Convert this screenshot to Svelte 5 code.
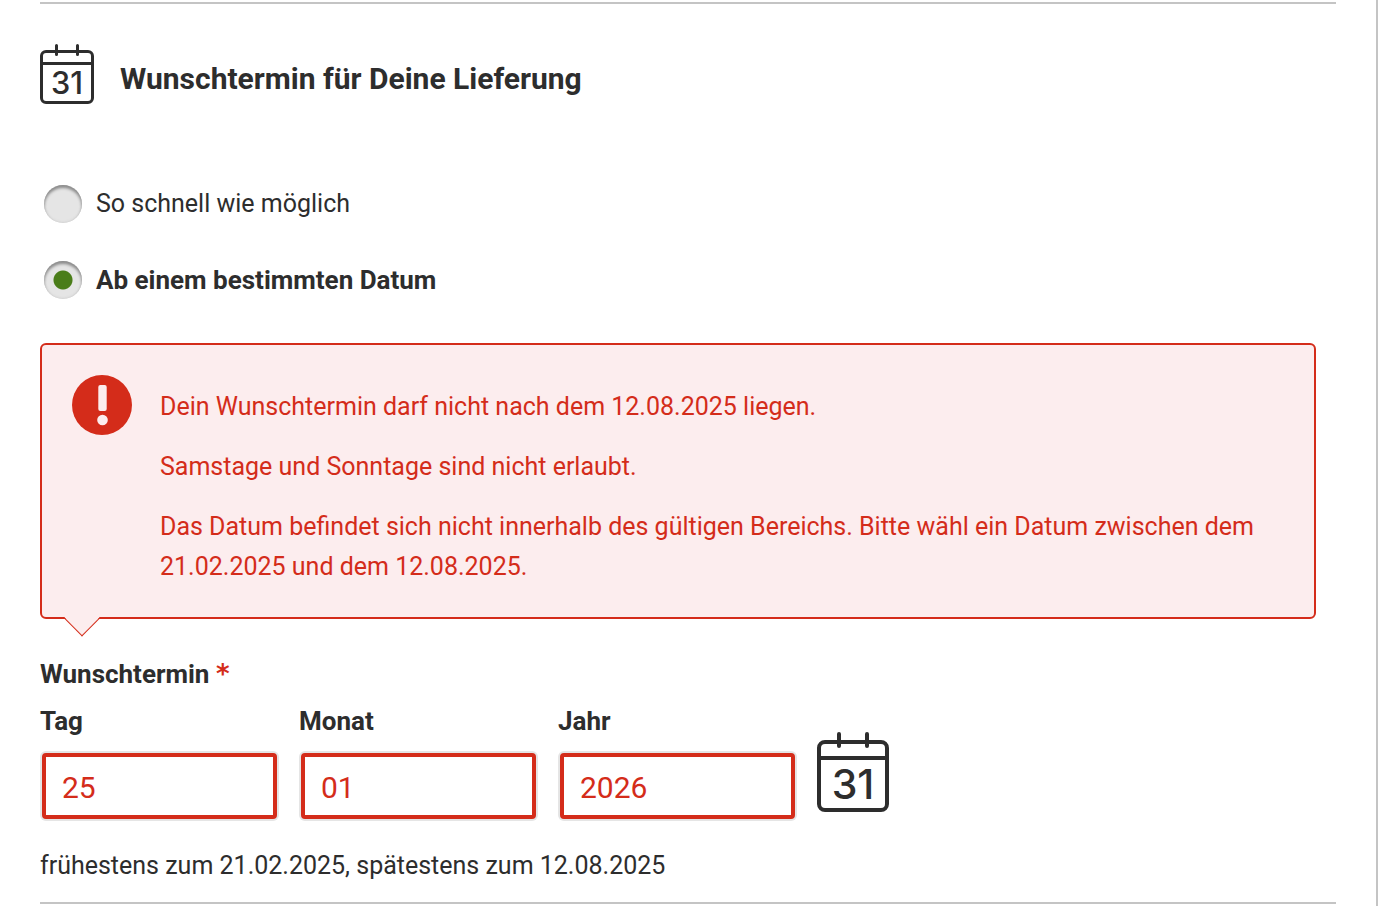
<script lang="ts">
    type Mode = "asap" | "date";

    let mode: Mode = $state("date");

    const options: { value: Mode; label: string }[] = [
        { value: "asap", label: "So schnell wie möglich" },
        { value: "date", label: "Ab einem bestimmten Datum" },
    ];

    const errors = [
        "Dein Wunschtermin darf nicht nach dem 12.08.2025 liegen.",
        "Samstage und Sonntage sind nicht erlaubt.",
        "Das Datum befindet sich nicht innerhalb des gültigen Bereichs. Bitte wähl ein Datum zwischen dem 21.02.2025 und dem 12.08.2025.",
    ];

    let fields = $state([
        { id: "day", label: "Tag", value: "25", max: 2 },
        { id: "month", label: "Monat", value: "01", max: 2 },
        { id: "year", label: "Jahr", value: "2026", max: 4 },
    ]);
</script>

{#snippet calendarIcon()}
    <svg class="calendar" viewBox="0 0 72 80" aria-hidden="true">
        <g
            fill="none"
            stroke="currentColor"
            stroke-width="4"
            stroke-linecap="round"
        >
            <rect x="2" y="10" width="68" height="68" rx="6" />
            <path d="M2 26H70" stroke-linecap="butt" />
            <path d="M22 2V14M50 2V14" />
        </g>
        <text x="36" y="67" text-anchor="middle">31</text>
    </svg>
{/snippet}

<main class="page">
    <section class="delivery">
        <header class="header">
            {@render calendarIcon()}
            <h2>Wunschtermin für Deine Lieferung</h2>
        </header>

        <div class="options" role="radiogroup" aria-label="Wunschtermin">
            {#each options as option (option.value)}
                <label class="option" class:selected={mode === option.value}>
                    <input
                        type="radio"
                        name="mode"
                        value={option.value}
                        bind:group={mode}
                    />
                    <span>{option.label}</span>
                </label>
            {/each}
        </div>

        {#if mode === "date"}
            <div class="alert" role="alert">
                <svg class="alert-icon" viewBox="0 0 60 60" aria-hidden="true">
                    <circle cx="30" cy="30" r="30" fill="#d42c1a" />
                    <rect
                        x="26.3"
                        y="10"
                        width="8.4"
                        height="26"
                        rx="2"
                        fill="#fcedee"
                    />
                    <circle cx="30.5" cy="45" r="5.3" fill="#fcedee" />
                </svg>
                <div class="alert-text">
                    {#each errors as error}
                        <p>{error}</p>
                    {/each}
                </div>
            </div>

            <fieldset class="date">
                <legend>Wunschtermin <span class="required">*</span></legend>
                <div class="date-row">
                    <div class="fields">
                        {#each fields as field (field.id)}
                            <div class="field">
                                <label for={field.id}>{field.label}</label>
                                <input
                                    id={field.id}
                                    type="text"
                                    inputmode="numeric"
                                    maxlength={field.max}
                                    aria-invalid="true"
                                    bind:value={field.value}
                                />
                            </div>
                        {/each}
                    </div>
                    <button
                        class="picker"
                        type="button"
                        aria-label="Kalender öffnen"
                    >
                        {@render calendarIcon()}
                    </button>
                </div>
                <p class="hint">
                    frühestens zum 21.02.2025, spätestens zum 12.08.2025
                </p>
            </fieldset>
        {/if}
    </section>
</main>

<style>
    :global(body) {
        background: #fff;
    }

    .page {
        --text: #2d2d2d;
        --error: #d42c1a;
        --error-bg: #fcedee;
        --rule: #c4c4c4;

        box-sizing: border-box;
        min-height: 100vh;
        padding: 2px 40px 0;
        border-right: 2px solid var(--rule);
        font-family: Roboto, sans-serif;
        font-size: 25px;
        line-height: 40px;
        color: var(--text);
    }

    .delivery {
        padding: 40px 0 16px;
        border-top: 2px solid var(--rule);
        border-bottom: 2px solid var(--rule);
    }

    .header {
        display: flex;
        align-items: flex-end;
        gap: 26px;
    }

    .calendar {
        display: block;
        flex-shrink: 0;
        width: 54px;
        height: 60px;
        overflow: visible;
        color: var(--text);
    }

    .calendar text {
        font-family: Inter, sans-serif;
        font-size: 41px;
        font-weight: 500;
        fill: currentColor;
    }

    h2 {
        margin: 0;
        font-size: 30px;
        font-weight: 700;
        line-height: 50px;
    }

    .options {
        display: flex;
        flex-direction: column;
        align-items: flex-start;
        gap: 36px;
        margin-top: 80px;
        padding-left: 4px;
    }

    .option {
        display: flex;
        align-items: center;
        gap: 14px;
        cursor: pointer;
    }

    .option.selected {
        font-size: 26px;
        font-weight: 700;
    }

    .option input {
        appearance: none;
        flex-shrink: 0;
        width: 38px;
        height: 38px;
        margin: 0;
        border-radius: 50%;
        background: #e5e5e5;
        box-shadow:
            inset 0 3px 3px #8c8c8c,
            inset 0 0 3px #c4c4c4;
        cursor: pointer;
    }

    .option input:checked {
        background: radial-gradient(circle, #4a7d19 9px, #e5e5e5 10px);
    }

    .alert {
        position: relative;
        display: flex;
        gap: 28px;
        margin: 43px 20px 0 0;
        padding: 30px;
        border: 2px solid var(--error);
        border-radius: 6px;
        background: var(--error-bg);
        color: var(--error);
    }

    /* pointer towards the date fields */
    .alert::after {
        content: "";
        position: absolute;
        left: 27px;
        bottom: -14px;
        box-sizing: border-box;
        width: 26px;
        height: 26px;
        border: solid var(--error);
        border-width: 0 1px 1px 0;
        background: linear-gradient(
            135deg,
            transparent 45%,
            var(--error-bg) 45%
        );
        transform: rotate(45deg);
    }

    .alert-icon {
        flex-shrink: 0;
        width: 60px;
        height: 60px;
    }

    .alert-text {
        display: flex;
        flex-direction: column;
        gap: 20px;
        margin-top: 12px;
    }

    p {
        margin: 0;
    }

    .date {
        min-width: 0;
        margin: 35px 0 0;
        padding: 0;
        border: none;
    }

    legend {
        padding: 0;
        font-size: 26px;
        font-weight: 700;
    }

    .required {
        font-family: "DejaVu Sans", sans-serif;
        line-height: 1;
        color: var(--error);
    }

    .date-row {
        display: flex;
        align-items: flex-end;
        gap: 20px;
        margin-top: 7px;
    }

    .fields {
        display: flex;
        gap: 20px;
    }

    .field {
        display: flex;
        flex-direction: column;
        gap: 12px;
        width: 239px;
    }

    .field label {
        font-size: 26px;
        font-weight: 700;
    }

    .field input {
        box-sizing: border-box;
        width: auto;
        min-width: 0;
        height: 66px;
        margin: 0 2px;
        padding: 2px 16px 0;
        border: 4px solid var(--error);
        border-radius: 4px;
        box-shadow: 0 0 0 2px #e5e5e5;
        background: #fff;
        font-family: inherit;
        font-size: 30px;
        color: var(--error);
        outline: none;
    }

    .picker {
        margin: 0 0 7px;
        padding: 0;
        border: none;
        background: none;
        cursor: pointer;
    }

    .picker .calendar {
        width: 72px;
        height: 80px;
    }

    .hint {
        margin-top: 27px;
    }
</style>
